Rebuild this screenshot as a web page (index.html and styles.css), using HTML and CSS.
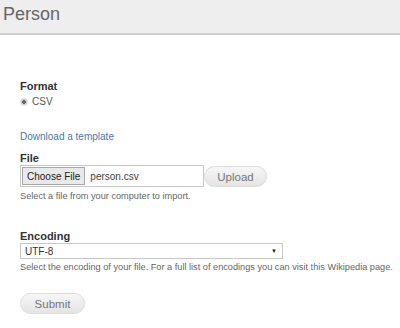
FILE: index.html
```html
<!DOCTYPE html>
<html lang="en">
<head>
  <meta charset="UTF-8" />
  <title>Person</title>
  <link rel="stylesheet" href="styles.css">
</head>
<body>
  <div class="header">
    <h1>Person</h1>
  </div>

  <form class="import-form">
    <div class="field">
      <div class="label">Format</div>
      <label class="radio"><span class="radio-dot"></span>CSV</label>
    </div>

    <a class="template-link" href="#">Download a template</a>

    <div class="field">
      <div class="label tight">File</div>
      <div class="file-row">
        <div class="file-input">
          <span class="choose-btn">Choose File</span>
          <span class="file-name">person.csv</span>
        </div>
        <span class="pill-btn upload-btn">Upload</span>
      </div>
      <div class="help">Select a file from your computer to import.</div>
    </div>

    <div class="field encoding">
      <div class="label tight">Encoding</div>
      <div class="select">
        <span>UTF-8</span>
        <span class="arrow">&#9660;</span>
      </div>
      <div class="help">Select the encoding of your file. For a full list of encodings you can visit <a href="#">this</a> Wikipedia page.</div>
    </div>

    <span class="pill-btn submit-btn">Submit</span>
  </form>
</body>
</html>
```

FILE: styles.css
```css
* {
  box-sizing: border-box;
}
body {
  margin: 0;
  font-family: 'Liberation Sans', Arial, sans-serif;
  background: #fff;
  color: #333;
  width: 400px;
  height: 328px;
  overflow: hidden;
}
.header {
  background: #eeeeee;
  height: 35px;
  border-bottom: 2px solid #cfcfcf;
  padding: 4px 3px 0;
}
.header h1 {
  margin: 0;
  font-size: 18px;
  font-weight: normal;
  color: #666;
}
.import-form {
  padding: 45px 20px 0;
}
.label {
  font-size: 11px;
  font-weight: bold;
  color: #333;
  margin-bottom: 4px;
}
.label.tight {
  margin-bottom: 1px;
}
.radio {
  display: flex;
  align-items: center;
  gap: 4px;
  font-size: 10px;
  color: #555;
}
.radio-dot {
  width: 8px;
  height: 8px;
  border-radius: 50%;
  background: radial-gradient(circle, #666 0 1.6px, #cfcfcf 2.2px);
  border: 1px solid #ddd;
}
.template-link {
  display: block;
  margin-top: 24px;
  font-size: 10px;
  color: #4c77ad;
  text-decoration: none;
}
.template-link + .field {
  margin-top: 10px;
}
.file-row {
  display: flex;
  align-items: center;
}
.file-input {
  display: flex;
  align-items: center;
  width: 184px;
  height: 22px;
  border: 1px solid #c8c8c8;
  padding: 1px;
  font-size: 10px;
}
.choose-btn {
  height: 18px;
  line-height: 17px;
  padding: 0 4px;
  background: #e9e9e9;
  border: 1px solid #a8a8a8;
  color: #222;
  font-size: 10px;
}
.file-name {
  margin-left: 5px;
  color: #444;
}
.pill-btn {
  display: inline-block;
  height: 21px;
  line-height: 20px;
  border-radius: 11px;
  border: 1px solid #dcdcdc;
  background: linear-gradient(#f6f6f6, #e4e4e4);
  color: #777;
  font-size: 11.5px;
  text-align: center;
}
.upload-btn {
  width: 63px;
}
.help {
  font-size: 9.2px;
  color: #666;
  margin-top: 4px;
  white-space: nowrap;
}
.help a {
  color: #4c77ad;
  text-decoration: none;
}
.encoding {
  margin-top: 29px;
}
.select {
  display: flex;
  justify-content: space-between;
  align-items: center;
  width: 263px;
  height: 16px;
  border: 1px solid #c8c8c8;
  padding: 0 5px 0 4px;
  font-size: 10px;
  color: #333;
}
.encoding .help {
  margin-top: 3px;
}
.arrow {
  font-size: 6px;
  color: #222;
}
.submit-btn {
  width: 65px;
  margin-top: 21px;
}
```
